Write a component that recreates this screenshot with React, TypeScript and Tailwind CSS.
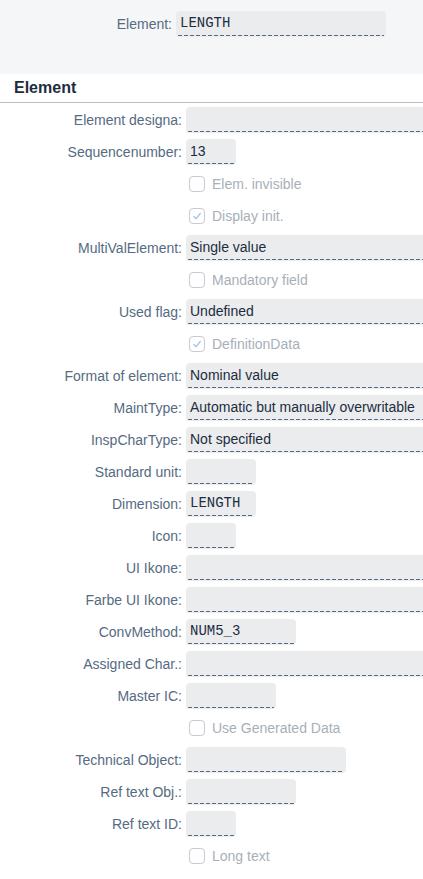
import React from "react";

type Row =
  | { kind: "field"; label: string; value?: string; w: string; mono?: boolean }
  | { kind: "check"; label: string; checked?: boolean };

const rows: Row[] = [
  { kind: "field", label: "Element designa:", w: "w-[260px]" },
  { kind: "field", label: "Sequencenumber:", value: "13", w: "w-[50px]" },
  { kind: "check", label: "Elem. invisible" },
  { kind: "check", label: "Display init.", checked: true },
  { kind: "field", label: "MultiValElement:", value: "Single value", w: "w-[260px]" },
  { kind: "check", label: "Mandatory field" },
  { kind: "field", label: "Used flag:", value: "Undefined", w: "w-[260px]" },
  { kind: "check", label: "DefinitionData", checked: true },
  { kind: "field", label: "Format of element:", value: "Nominal value", w: "w-[260px]" },
  { kind: "field", label: "MaintType:", value: "Automatic but manually overwritable", w: "w-[260px]" },
  { kind: "field", label: "InspCharType:", value: "Not specified", w: "w-[260px]" },
  { kind: "field", label: "Standard unit:", w: "w-[70px]" },
  { kind: "field", label: "Dimension:", value: "LENGTH", w: "w-[70px]", mono: true },
  { kind: "field", label: "Icon:", w: "w-[50px]" },
  { kind: "field", label: "UI Ikone:", w: "w-[260px]" },
  { kind: "field", label: "Farbe UI Ikone:", w: "w-[260px]" },
  { kind: "field", label: "ConvMethod:", value: "NUM5_3", w: "w-[110px]", mono: true },
  { kind: "field", label: "Assigned Char.:", w: "w-[260px]" },
  { kind: "field", label: "Master IC:", w: "w-[90px]" },
  { kind: "check", label: "Use Generated Data" },
  { kind: "field", label: "Technical Object:", w: "w-[160px]" },
  { kind: "field", label: "Ref text Obj.:", w: "w-[110px]" },
  { kind: "field", label: "Ref text ID:", w: "w-[50px]" },
  { kind: "check", label: "Long text" },
];

function Field({ value, w, mono }: { value?: string; w: string; mono?: boolean }) {
  return (
    <div className={`${w} h-[26px] shrink-0 bg-[#eaecee] rounded-[4px] flex flex-col`}>
      <div
        className={`flex-1 flex items-center pl-1 pt-px whitespace-nowrap overflow-hidden text-[#1d2d3e] ${
          mono ? "font-['Liberation_Mono',monospace] text-[14px]" : "text-[14px]"
        }`}
      >
        {value}
      </div>
      <div className="mx-[2px] mb-px h-px bg-[linear-gradient(to_right,#556b82_4px,transparent_4px)] bg-[length:6px_1px] bg-repeat-x" />
    </div>
  );
}

function Check({ label, checked }: { label: string; checked?: boolean }) {
  return (
    <div className="flex items-center">
      <div className="ml-[3px] w-4 h-4 rounded-[4px] border border-[#c5cbd1] bg-white flex items-center justify-center">
        {checked && (
          <svg width="10" height="10" viewBox="0 0 10 10" fill="none">
            <path d="M1.5 5.2 L4 7.6 L8.6 2.2" stroke="#92b9e6" strokeWidth="1.1" />
          </svg>
        )}
      </div>
      <span className="ml-[7px] text-[14px] text-[#a7b0b9]">{label}</span>
    </div>
  );
}

export default function App() {
  return (
    <div className="w-[423px] h-[879px] overflow-hidden bg-white font-['Liberation_Sans',Arial,sans-serif] text-[14px]">
      <div className="h-[74px] bg-[#f5f6f7] pt-[11px] flex">
        <div className="w-[172px] h-[26px] flex items-center justify-end text-[#556b82]">Element:</div>
        <div className="ml-1">
          <Field value="LENGTH" w="w-[210px]" mono />
        </div>
      </div>
      <div className="h-[29px] border-b border-[#b9bec3] flex items-center pl-[14px] text-[16px] font-bold text-[#1d2d3e]">
        Element
      </div>
      <div className="pt-px">
        {rows.map((r, i) => (
          <div key={i} className="h-8 flex items-center">
            <div className="w-[182px] shrink-0 text-right text-[#556b82] whitespace-nowrap">
              {r.kind === "field" ? r.label : ""}
            </div>
            <div className="ml-1 flex items-center">
              {r.kind === "field" ? (
                <Field value={r.value} w={r.w} mono={r.mono} />
              ) : (
                <Check label={r.label} checked={r.checked} />
              )}
            </div>
          </div>
        ))}
      </div>
    </div>
  );
}
